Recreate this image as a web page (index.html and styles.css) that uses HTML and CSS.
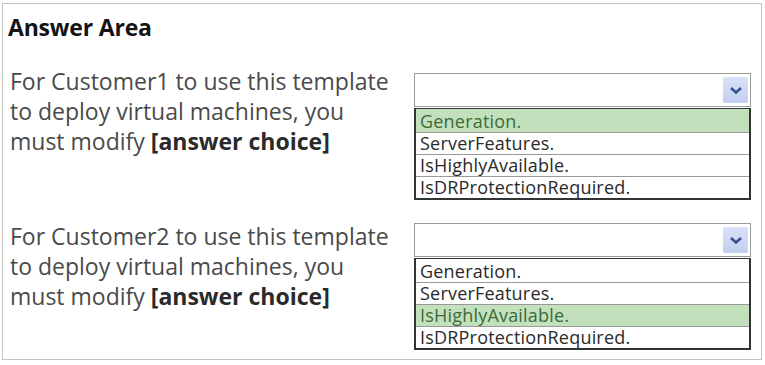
FILE: index.html
```html
<!doctype html>
<html lang="en">
<head>
    <meta charset="utf-8">
    <title>Answer Area</title>
    <link rel="stylesheet" href="styles.css">
</head>
<body>
<div class="answer-area">
    <h1 class="title">Answer Area</h1>

    <div class="question">
        <p class="prompt">For Customer1 to use this template<br>to deploy virtual machines, you<br>must modify <b>[answer choice]</b></p>
        <div class="dropdown">
            <div class="select">
                <span class="arrow">
                    <svg width="14" height="9" viewBox="0 0 14 9"><path d="M2 2 L7 6.5 L12 2" fill="none" stroke="#34508f" stroke-width="2.6"/></svg>
                </span>
            </div>
            <ul class="options">
                <li class="chosen">Generation.</li>
                <li>ServerFeatures.</li>
                <li>IsHighlyAvailable.</li>
                <li>IsDRProtectionRequired.</li>
            </ul>
        </div>
    </div>

    <div class="question second">
        <p class="prompt">For Customer2 to use this template<br>to deploy virtual machines, you<br>must modify <b>[answer choice]</b></p>
        <div class="dropdown">
            <div class="select">
                <span class="arrow">
                    <svg width="14" height="9" viewBox="0 0 14 9"><path d="M2 2 L7 6.5 L12 2" fill="none" stroke="#34508f" stroke-width="2.6"/></svg>
                </span>
            </div>
            <ul class="options">
                <li>Generation.</li>
                <li>ServerFeatures.</li>
                <li class="chosen">IsHighlyAvailable.</li>
                <li>IsDRProtectionRequired.</li>
            </ul>
        </div>
    </div>
</div>
</body>
</html>
```

FILE: styles.css
```css
body {
    margin: 0;
    background-color: #ffffff;
    font-family: "Open Sans", sans-serif;
}

.answer-area {
    margin: 3px 3px 0 2px;
    height: 357px;
    box-sizing: border-box;
    border: 1px solid #c4c4c4;
    padding: 9px 0 0 5px;
}

.title {
    margin: 0;
    font-size: 23px;
    font-weight: bold;
    letter-spacing: -0.2px;
    color: #141414;
    line-height: 28px;
}

.question {
    display: flex;
    margin-top: 32px;
}

.question.second {
    margin-top: 23px;
}

.prompt {
    flex: 0 0 396px;
    margin: -7px 8px 0 2px;
    font-size: 23px;
    line-height: 30px;
    color: #4a4a4a;
    white-space: nowrap;
}

.second .prompt {
    margin-top: -2px;
}

.prompt b {
    color: #2a2a2a;
}

.dropdown {
    width: 337px;
}

.select {
    height: 34px;
    box-sizing: border-box;
    border: 1px solid #9a9a9a;
    display: flex;
    justify-content: flex-end;
    align-items: center;
    padding-right: 2px;
}

.arrow {
    width: 25px;
    height: 26px;
    display: flex;
    align-items: center;
    justify-content: center;
    background: linear-gradient(#d9e2f8, #c3cff0);
    border-radius: 2px;
}

.options {
    list-style: none;
    margin: 1px 0 0;
    padding: 0;
    border: 2px solid #333;
    border-top-width: 1px;
    font-size: 18px;
    letter-spacing: 0.2px;
    color: #2a2a2a;
}

.options li {
    height: 21px;
    line-height: 21px;
    padding-left: 4px;
    border-top: 1px solid #9a9a9a;
    white-space: nowrap;
}

.options li:first-child {
    border-top: 0;
    height: 23px;
    line-height: 25px;
}

.options li.chosen {
    background-color: #c3e0bd;
    color: #3d6b3b;
}
```
